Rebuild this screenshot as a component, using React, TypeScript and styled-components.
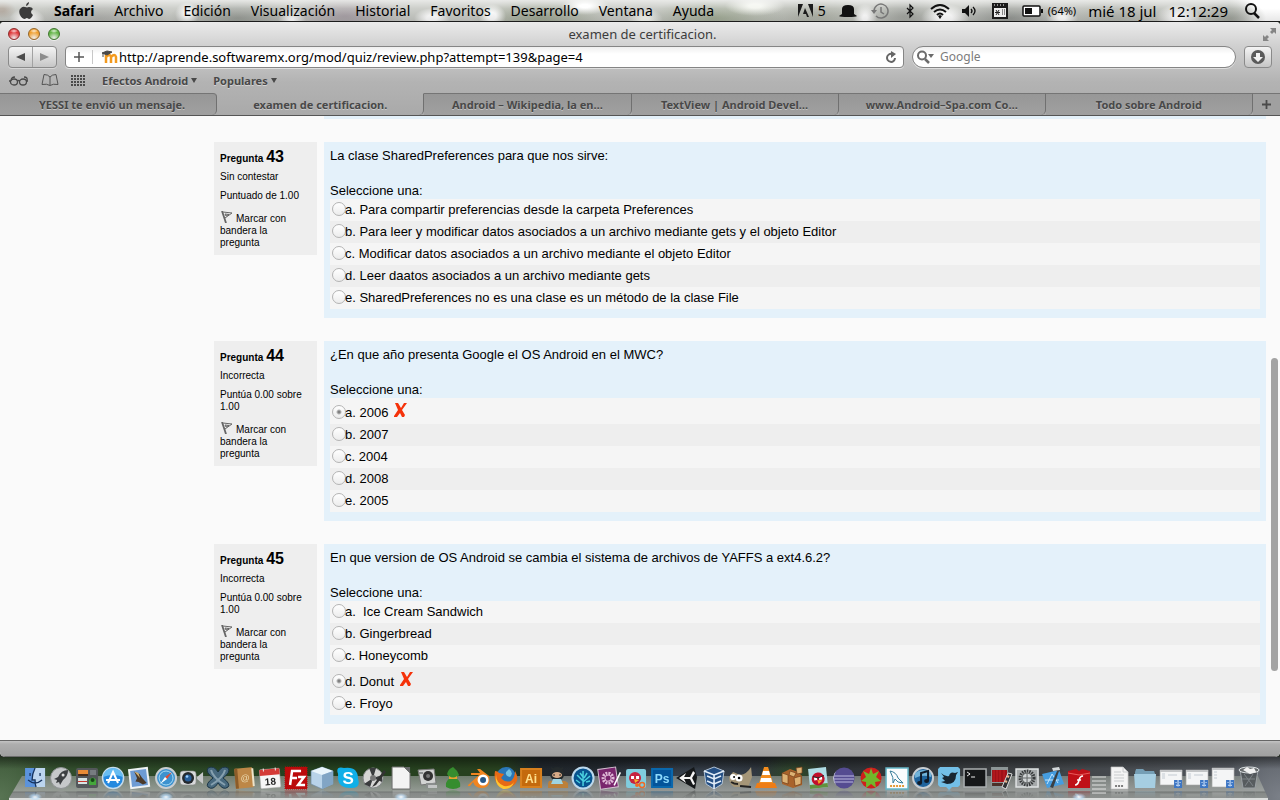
import React from "react";
import styled, { createGlobalStyle } from "styled-components";

const GlobalStyle = createGlobalStyle`
  *, *::before, *::after { box-sizing: border-box; }
  body { margin: 0; background: #2a3029; }
  button, input { font: inherit; color: inherit; margin: 0; padding: 0; border: 0; background: none; }
`;

const uiFont = `"Lucida Grande", "Noto Sans", sans-serif`;
const pageFont = `"Liberation Sans", Arial, sans-serif`;

const Desktop = styled.div`
  min-height: 100vh;
  display: flex;
  flex-direction: column;
  font-family: ${uiFont};
`;

/* ---------- menu bar ---------- */

const MenuBar = styled.header`
  height: 22px;
  display: flex;
  align-items: center;
  padding: 0 16px 0 19px;
  border-bottom: 1px solid #1c1c1c;
  font-size: 14px;
  line-height: 20px;
  color: #000;
  background:
    linear-gradient(rgba(255, 255, 255, 0.6), rgba(255, 255, 255, 0.1) 40%, rgba(60, 60, 60, 0.12)),
    radial-gradient(ellipse 18px 12px at 27px 20px, #fff 30%, transparent),
    radial-gradient(ellipse 14px 9px at 2px 10px, #b2a99f 20%, transparent),
    radial-gradient(ellipse 12px 12px at 187px 14px, #fff 20%, transparent),
    radial-gradient(ellipse 14px 12px at 292px 20px, #fff 10%, transparent),
    radial-gradient(ellipse 18px 10px at 432px 18px, #fff 30%, transparent),
    radial-gradient(ellipse 14px 12px at 492px 16px, #fff 30%, transparent),
    radial-gradient(ellipse 24px 9px at 585px 6px, #fff 20%, transparent),
    radial-gradient(ellipse 18px 12px at 645px 20px, #f4f6f0 20%, transparent),
    radial-gradient(ellipse 30px 10px at 755px 6px, #f3f5ef 20%, transparent),
    radial-gradient(ellipse 12px 14px at 865px 18px, #fff 20%, transparent),
    radial-gradient(ellipse 24px 14px at 945px 18px, #fff 30%, transparent),
    radial-gradient(ellipse 16px 10px at 1062px 18px, #fff 20%, transparent),
    radial-gradient(ellipse 22px 14px at 1178px 18px, #fff 20%, transparent),
    radial-gradient(ellipse 70px 20px at 100px 18px, #adaeaa, transparent),
    radial-gradient(ellipse 70px 20px at 238px 18px, #959993, transparent),
    radial-gradient(ellipse 60px 20px at 345px 16px, #a59da3, transparent),
    radial-gradient(ellipse 70px 20px at 540px 18px, #99a28d, transparent),
    radial-gradient(ellipse 70px 20px at 715px 18px, #9ea892, transparent),
    radial-gradient(ellipse 60px 20px at 815px 16px, #a9ada2, transparent),
    radial-gradient(ellipse 40px 20px at 905px 16px, #9da09a, transparent),
    radial-gradient(ellipse 60px 20px at 1010px 18px, #90938f, transparent),
    radial-gradient(ellipse 70px 20px at 1115px 18px, #aeb1aa, transparent),
    radial-gradient(ellipse 36px 20px at 1230px 18px, #9b9f97, transparent),
    linear-gradient(90deg, #c7c9c4 0 96%, #fff 98%);
`;

const MenuList = styled.nav`
  display: flex;
  align-items: center;
  gap: 20px;
  flex: 1;
`;

const MenuButton = styled.button<{ $strong?: boolean }>`
  font-weight: ${(p) => (p.$strong ? 700 : 400)};
`;

const StatusList = styled.div`
  display: flex;
  align-items: center;
  gap: 12px;
  white-space: nowrap;
`;

const StatusItem = styled.div<{ $size?: number }>`
  display: flex;
  align-items: center;
  gap: 5px;
  font-size: ${(p) => p.$size ?? 14}px;
`;

const Glyph = styled.svg`
  display: block;
  flex: none;
`;

/* ---------- browser window ---------- */

const Window = styled.div`
  flex: 1;
  display: flex;
  flex-direction: column;
  border-radius: 4px 4px 5px 5px;
  overflow: hidden;
  background: #fafafa;
`;

const Chrome = styled.div`
  background: linear-gradient(#ebebeb, #d0d0d0 24px, #b3b3b3 60px, #a9a9a9);
`;

const TitleBar = styled.div`
  height: 24px;
  display: grid;
  grid-template-columns: 80px 1fr 80px;
  align-items: center;
  padding: 0 3px 0 8px;
`;

const Lights = styled.div`
  display: flex;
  gap: 8px;
`;

const Light = styled.button<{ $color: string; $edge: string }>`
  width: 12px;
  height: 12px;
  border-radius: 50%;
  border: 1px solid ${(p) => p.$edge};
  background: radial-gradient(ellipse 4px 2px at 50% 20%, #ffffffd0, transparent),
    radial-gradient(circle at 50% 90%, #ffffff90, ${(p) => p.$color} 60%);
  box-shadow: 0 1px 0 #ffffff90;
`;

const Title = styled.div`
  text-align: center;
  font-size: 13px;
  line-height: 18px;
  color: #3c3c3c;
`;

const FullScreen = styled.button`
  justify-self: end;
`;

const Toolbar = styled.div`
  display: flex;
  gap: 8px;
  padding: 0 8px;
`;

const NavGroup = styled.div`
  display: flex;
  width: 49px;
  height: 22px;
  border: 1px solid #8a8a8a;
  border-radius: 4px;
  background: linear-gradient(#f4f4f4, #c6c6c6);
  box-shadow: 0 1px 0 #ffffff60;
`;

const NavButton = styled.button`
  flex: 1;
  display: flex;
  align-items: center;
  justify-content: center;
  & + & { border-left: 1px solid #a2a2a2; }
`;

const Field = styled.div<{ $round?: boolean }>`
  flex: ${(p) => (p.$round ? "0 1 324px" : "1")};
  min-width: 0;
  height: 22px;
  display: flex;
  align-items: center;
  padding: ${(p) => (p.$round ? "0 10px 0 3px" : "0 6px 0 0")};
  border: 1px solid #858585;
  border-radius: ${(p) => (p.$round ? 11 : 4)}px;
  background: linear-gradient(#efefef, #fff 7px);
  box-shadow: 0 1px 0 #ffffff80;
`;

const AddBookmark = styled.button`
  width: 27px;
  height: 14px;
  display: flex;
  align-items: center;
  justify-content: center;
  border-right: 1px solid #c8c8c8;
  margin-right: 9px;
`;

const FieldInput = styled.input`
  flex: 1;
  min-width: 0;
  font-size: 13px;
  line-height: 18px;
  color: #000;
  outline: 0;
  margin-left: 1px;
  &::placeholder { color: #7b7b7b; opacity: 1; }
`;

const SearchInput = styled(FieldInput)`
  font-size: 12px;
  margin-left: 6px;
`;

const Download = styled.button`
  width: 28px;
  height: 22px;
  display: flex;
  align-items: center;
  justify-content: center;
  border: 1px solid #8a8a8a;
  border-radius: 4px;
  background: linear-gradient(#f4f4f4, #c6c6c6);
`;

const Bookmarks = styled.div`
  height: 25px;
  display: flex;
  align-items: center;
  gap: 16px;
  padding: 0 9px;
  font-size: 11px;
  font-weight: 700;
  line-height: 16px;
  color: #484848;
  text-shadow: 0 1px 0 #ffffff70;
`;

const BookmarkIcons = styled.div`
  display: flex;
  align-items: center;
  gap: 12px;
`;

const Folder = styled.button`
  display: flex;
  align-items: center;
  gap: 3px;
  text-shadow: inherit;
`;

const TabStrip = styled.div`
  display: grid;
  grid-template-columns: 217fr repeat(5, 207fr) 27px;
  height: 23px;
  border-bottom: 1px solid #555;
`;

const Tab = styled.button<{ $active?: boolean }>`
  min-width: 0;
  padding: 0 24px;
  overflow: hidden;
  white-space: nowrap;
  text-overflow: ellipsis;
  font-size: 11px;
  font-weight: 700;
  line-height: 20px;
  color: #484848;
  text-shadow: 0 1px 0 #ffffff60;
  border-top: 1px solid ${(p) => (p.$active ? "transparent" : "#757575")};
  border-right: 1px solid #707070;
  border-bottom-right-radius: 5px;
  background: ${(p) => (p.$active ? "transparent" : "linear-gradient(#979797, #a0a0a0)")};
  &:first-child { padding-left: 32px; border-top-right-radius: 4px; }
`;

const NewTab = styled.button`
  display: flex;
  align-items: center;
  justify-content: center;
  border-top: 1px solid #757575;
  background: #a0a0a0;
`;

/* ---------- quiz page ---------- */

const Page = styled.main`
  position: relative;
  flex: 1;
  padding: 0 14px 15px 214px;
  font-family: ${pageFont};
  color: #000;
`;

const ScrollThumb = styled.div`
  position: absolute;
  right: 2px;
  top: 242px;
  width: 7px;
  height: 313px;
  border-radius: 4px;
  background: #a3a3a3;
`;

const PreviousEnd = styled.div`
  height: 3px;
  margin: 0 0 23px 110px;
  background: #e4f1fa;
`;

const Question = styled.section`
  display: grid;
  grid-template-columns: 103px 1fr;
  column-gap: 7px;
  align-items: start;
  & + & { margin-top: 23px; }
`;

const Info = styled.div`
  padding: 6px 10px 6px 6px;
  background: #eee;
  font-size: 10px;
  line-height: 12px;
`;

const Number = styled.h3`
  margin: 0 0 3px;
  font-size: 10px;
  font-weight: 700;
  line-height: 18px;
  span { font-size: 16px; }
`;

const State = styled.p`
  margin: 0 0 7px;
`;

const FlagButton = styled.button`
  display: block;
  margin-top: 9px;
  text-align: left;
  svg { vertical-align: -1px; margin-right: 1px; }
`;

const Body = styled.form`
  padding: 5px 6px 9px;
  background: #e4f1fa;
  font-size: 13px;
  line-height: 17px;
`;

const Prompt = styled.p`
  margin: 0 0 18px;
`;

const Answers = styled.fieldset`
  margin: 0;
  padding: 0;
  border: 0;
  min-width: 0;
`;

const Legend = styled.legend`
  padding: 0;
`;

const Answer = styled.label<{ $odd: boolean; $wrong?: boolean }>`
  display: flex;
  align-items: center;
  height: ${(p) => (p.$wrong ? 26 : 22)}px;
  padding: ${(p) => (p.$wrong ? "2px 0 0 2px" : "0 0 2px 2px")};
  background: ${(p) => (p.$odd ? "#eee" : "#f5f5f5")};
  white-space: pre-wrap;
`;

const Radio = styled.input`
  appearance: none;
  flex: none;
  width: 14px;
  height: 14px;
  border: 1px solid #b4b4b4;
  border-radius: 50%;
  margin-right: -1px;
  background: linear-gradient(#fff, #ececec);
  &:checked { background: radial-gradient(circle, #808080 1px, transparent 3px), linear-gradient(#fff, #ececec); }
`;

const Wrong = styled.svg`
  display: block;
  margin: 0 0 5px 5px;
`;

const StatusBar = styled.footer`
  height: 17px;
  border-top: 1px solid #666;
  border-bottom: 1px solid #6c6c6c;
  background: linear-gradient(#c4c4c4, #aeaeae 3px, #a0a0a0);
`;

/* ---------- dock ---------- */

const DockArea = styled.div`
  height: 43px;
  padding: 9px 18px 0 22px;
  position: relative;
  overflow: hidden;
  background:
    linear-gradient(#00000070, transparent 12px),
    radial-gradient(ellipse 60px 60px at 0 40px, #587453, transparent),
    radial-gradient(ellipse 40px 30px at 795px 20px, #2e4a27, transparent),
    radial-gradient(ellipse 60px 60px at 1280px 40px, #7b8088, transparent),
    radial-gradient(ellipse 120px 20px at 700px 20px, #3b4552, transparent),
    linear-gradient(90deg, #355030, #24401f 300px, #27401f 500px, #20262c 540px, #262b30 760px, #3a3d40 1000px, #565b62);
`;

const Shelf = styled.div`
  position: absolute;
  left: 9px;
  right: 12px;
  top: 19px;
  height: 22px;
  clip-path: polygon(13px 0, calc(100% - 10px) 0, 100% 100%, 0 100%);
  background: linear-gradient(#8f9690b0, #a2a6a3e0 15px, #707472 16px, #858987 17px, #8d918f);
`;

const ShelfEdge = styled.div`
  position: absolute;
  left: 9px;
  right: 12px;
  bottom: 0;
  height: 2px;
  background: #dcdedd;
`;

const DockItems = styled.nav`
  position: relative;
  display: flex;
`;

const DockItem = styled.button<{ $running?: boolean }>`
  flex: 26 1 0;
  min-width: 0;
  height: 34px;
  display: flex;
  align-items: flex-start;
  background: ${(p) =>
    p.$running ? "radial-gradient(ellipse 7px 4px at 50% 31px, #fff, #bfe2ffb0 50%, transparent)" : "none"};
  svg {
    display: block;
    width: 100%;
    height: 24px;
    -webkit-box-reflect: below -1px linear-gradient(transparent 60%, #00000050);
  }
`;

const DockSeparator = styled.div`
  flex: 13 1 0;
  height: 30px;
  padding-top: 10px;
  background: repeating-linear-gradient(#ffffff60 0 2px, transparent 2px 4px) content-box;
`;

type Drawing = { name: string; art: React.ReactNode; running?: boolean };

const label = (x: number, y: number, size: number, fill: string, text: string) => (
  <text x={x} y={y} fontSize={size} fontWeight="700" fill={fill} textAnchor="middle" fontFamily="Liberation Sans">
    {text}
  </text>
);

const folderWindow = (
  <>
    <path d="M2 4h22v15H2z" fill="#f4f5f6" stroke="#aaa" strokeWidth=".6" />
    <path d="M2 4h22v2H2z" fill="#c3c5c7" />
    <path d="M4 8h3M4 10h3M4 12h3M10 9h9" stroke="#c3cad2" />
    <path d="M16 14h8v8h-8z" fill="#3d76c4" />
    <path d="M20 14v5M18 16v1M22 16v1M18 19q2 2 4 0" stroke="#dfeeff" fill="none" />
  </>
);

const drawings: Drawing[] = [
  { name: "Finder", running: true, art: <><path d="M3 2h20v19H3z" fill="#5b93dc" /><path d="M13 2h10v19h-9q-1-4-1-6h-3Q11 6 13 2z" fill="#bcd5ef" /><path d="M8 7v3M18 7v3M6 14q7 6 14 0M13 2q-3 6-3 12h3q0 4 1 7" stroke="#16335f" fill="none" strokeWidth="1.3" /></> },
  { name: "Launchpad", art: <><circle cx="13" cy="12" r="10.5" fill="#c6c8ca" stroke="#8f9294" /><path d="M20 4q-7 0-10 7l-4 2 3 1-1 3 3-1 1 3 3-5q5-4 5-10z" fill="#3c3f42" /><circle cx="15" cy="9" r="1.5" fill="#ddd" /></> },
  { name: "Paneles", art: <><rect x="2" y="2" width="22" height="20" rx="2" fill="#53575a" /><path d="M4 4h10v6H4z" fill="#e78a35" /><path d="M4 8h10v2H4z" fill="#472c1a" /><path d="M16 4h6v5h-6z" fill="#777c80" /><path d="M4 12h9v6H4z" fill="#d7e4e4" /><path d="M4 15h9v1H4z" fill="#c9362d" /><path d="M15 19v-5q4-5 7 0v5z" fill="#45a83b" /><circle cx="18.5" cy="14" r="2" fill="#174818" /></> },
  { name: "App Store", art: <><circle cx="13" cy="12" r="10.5" fill="#2489df" stroke="#c5dcec" strokeWidth="1.5" /><path d="M3 11a10 9 0 0 1 20 0q-10-4-20 0z" fill="#67bdf2" /><path d="M8 17l5-11 5 11M6 14h14" stroke="#fff" strokeWidth="2" fill="none" /></> },
  { name: "Mail", art: <g transform="rotate(-7 13 12)"><path d="M3 2h20v20H3z" fill="#eef2f4" /><path d="M5 4h16v16H5z" fill="#6d9bd4" /><path d="M9 5l5 3 2 4 4 6-4 1-4-3-3-1 2-3z" fill="#4b3a2a" /><path d="M9 5l4 2 1 5z" fill="#d3b478" /></g> },
  { name: "Safari", running: true, art: <><circle cx="13" cy="12" r="10" fill="#3d92cf" stroke="#c9cdd0" strokeWidth="2" /><circle cx="13" cy="12" r="7" fill="none" stroke="#aadcf4" /><path d="M19 6l-5 7-2-2z" fill="#e34b31" /><path d="M7 18l5-7 2 2z" fill="#fff" /></> },
  { name: "FaceTime", art: <><rect x="1" y="5" width="16" height="14" rx="3" fill="#d8dadb" stroke="#888" strokeWidth=".6" /><path d="M18 11l6-5v12l-6-5z" fill="#c6c8c9" /><circle cx="9" cy="12" r="6" fill="#24292e" /><circle cx="9" cy="12" r="3.5" fill="#285e99" /><circle cx="8" cy="10.5" r="1.3" fill="#9ed2ff" /></> },
  { name: "X11", art: <><path d="M3 2q6-3 10 4 4-7 10-4 3 4-5 10 8 6 5 9-5 4-10-4-5 8-10 4-3-3 5-9-8-6-5-10z" fill="#48697e" stroke="#1b3546" /><path d="M6 4q2 8 14 15M20 4Q18 12 6 19" stroke="#86a0af" strokeWidth="2" fill="none" /></> },
  { name: "Contactos", art: <g transform="rotate(-5 13 12)"><rect x="4" y="2" width="18" height="20" rx="1" fill="#bd8747" /><path d="M4 2h3v20H4z" fill="#8b5c29" /><path d="M21 3h2v18h-2z" fill="#eee4cb" />{label(14, 15, 9, "#ead7ac", "@")}</g> },
  { name: "Calendario", art: <g transform="rotate(-5 13 12)"><rect x="3" y="3" width="20" height="19" rx="1" fill="#f6f6f6" stroke="#aaa" strokeWidth=".5" /><path d="M3 3h20v6H3z" fill="#d43a36" /><path d="M7 2v3M19 2v3" stroke="#eee" />{label(13, 19, 10, "#222", "18")}</g> },
  { name: "FileZilla", art: <><path d="M2 1h22v22H2z" fill="#bb0a0b" stroke="#bb0a0b" strokeDasharray="1 1" /><path d="M7 19L9 5h9M8 12h6M15 11h6l-6 8h7" fill="none" stroke="#fff" strokeWidth="2.5" /></> },
  { name: "Cubo", art: <><path d="M13 1l11 4v13l-11 5-11-5V5z" fill="#b8d3e9" stroke="#6f8da7" strokeWidth=".6" /><path d="M13 1l11 4-11 4L2 5z" fill="#e9f5fc" /><path d="M13 9l11-4v13l-11 5z" fill="#81a5c5" /></> },
  { name: "Skype", art: <><path d="M3 8Q0 0 9 2q14-2 14 11 3 9-7 9Q3 22 3 12z" fill="#10afe8" />{label(13, 18, 17, "#fff", "S")}</> },
  { name: "Disco", art: <><circle cx="12" cy="12" r="10" fill="#d7d7d5" stroke="#85888a" /><path d="M12 12L8 2h7zM12 12l9-3v7zM12 12l-9 6 6 3z" fill="#3a3c3d" /><circle cx="12" cy="12" r="3" fill="#777" /><path d="M23 4L13 18l-2 3 4-2L25 6z" fill="#333" /></> },
  { name: "LibreOffice", running: true, art: <><path d="M4 1h12l6 6v16H4z" fill="#f3f3f3" stroke="#707070" /><path d="M16 1h6v6z" fill="#686b6c" /></> },
  { name: "Captura", art: <><path d="M4 4l16-1 2 14-15 2z" fill="#d2d3d2" stroke="#777" /><circle cx="14" cy="10" r="5" fill="#333" /><circle cx="14" cy="10" r="2" fill="#777" /><path d="M12 17h9v5h-9zM5 6h4v2H5z" fill="#8b8e8e" /><path d="M14 19h9v3h-9z" fill="#c3c5c5" /></> },
  { name: "Adium", art: <><path d="M13 1q4 3 6 8-2 3-4 3 6 2 5 9-7 4-14 0-1-7 5-9-3-1-4-4 1-5 6-7z" fill="#368d2f" /><path d="M9 10q4 3 8 0v3H9z" fill="#e8a42e" /></> },
  { name: "Blender", art: <><path d="M2 19L13 9H5V7h9l-3-4h3l9 7q2 12-7 12-7 0-9-6l-3 4H2z" fill="#f08520" /><circle cx="17" cy="14" r="5.5" fill="#fff" /><circle cx="17" cy="14" r="3" fill="#265787" /></> },
  { name: "Firefox", art: <><circle cx="14" cy="11" r="10" fill="#2a77b8" /><path d="M17 3q5 4 1 8-5-1-4-5z" fill="#73c2e3" /><path d="M3 5q3 0 4 2l5 1-3 4q4 5 10 3 4-4 4-10 5 9-1 14-7 6-15 1Q1 14 3 5z" fill="#e66a16" /><path d="M4 9q0 8 8 11 6 1 10-4-3 8-11 7Q2 19 4 9z" fill="#ffc42f" /></> },
  { name: "Illustrator", art: <><path d="M2 2h22v20H2z" fill="#d9811e" /><path d="M4 4h18v16H4z" fill="#c46a0d" />{label(13, 17, 12, "#ffe08c", "Ai")}</> },
  { name: "GitHub", art: <><circle cx="13" cy="8" r="7" fill="#242a2c" /><path d="M7 1l4 2H7zM19 1l-4 2h4z" fill="#242a2c" /><ellipse cx="13" cy="9" rx="5" ry="3" fill="#d8ab87" /><path d="M10 8v2M16 8v2" stroke="#222" /><path d="M5 15h16l3 2v5H4v-5z" fill="#bc803a" /><path d="M9 13h8l2 5H7z" fill="#9ed4e2" /></> },
  { name: "SourceTree", art: <><circle cx="13" cy="12" r="10.5" fill="#07538f" stroke="#bcd9ed" strokeWidth="2" /><path d="M13 20V5M13 15L7 9M13 16l7-6M13 11l-3-4M14 12l3-5M10 17l-4-3M16 16l4-1" stroke="#4ad0df" strokeWidth="1.5" /></> },
  { name: "Engranaje", art: <g transform="rotate(-8 13 12)"><path d="M3 2h18v20H3z" fill="#79256d" stroke="#d3bfd0" /><circle cx="12" cy="12" r="5" fill="none" stroke="#dfb8d7" strokeWidth="3" strokeDasharray="2 1" /><circle cx="12" cy="12" r="3" fill="#79256d" stroke="#dfb8d7" /><path d="M25 8l-8 12" stroke="#fff" strokeWidth="1.5" /></g> },
  { name: "Rio", art: <><rect x="3" y="3" width="20" height="19" rx="2" fill="#80cdde" /><circle cx="12" cy="12" r="6" fill="#c7233f" /><path d="M8 10h3v3H8zM13 10h3v3h-3z" fill="#fff" /><path d="M11 13l5 1-4 3z" fill="#f5b22b" /><circle cx="19" cy="19" r="2.5" fill="none" stroke="#f16a24" strokeWidth="1.5" /><circle cx="14" cy="19" r="2" fill="#f16a24" /></> },
  { name: "Photoshop", art: <><path d="M2 2h22v20H2z" fill="#0a68ad" /><path d="M4 4h18v16H4z" fill="#04549a" />{label(13, 17, 12, "#8ddafd", "Ps")}</> },
  { name: "Unity", art: <><path d="M1 12L19 1l3 10-2 12z" fill="#15181a" /><path d="M4 12l7-5-2 4h6l3-6 2 2-3 5 3 6-2 1-3-6H9l2 4z" fill="#f4f4f4" /></> },
  { name: "VirtualBox", art: <><path d="M13 1l10 4-2 13-8 5-8-5L3 5z" fill="#244f84" stroke="#b2c3d5" /><path d="M3 5l10 4 10-4M13 9v14M6 10l7 3 7-3M6 15l7 3 7-3" stroke="#e2edf8" fill="none" strokeWidth="1.6" /></> },
  { name: "GIMP", art: <><path d="M2 11l4-5 7 3q7-1 11-8l1 10-4 10H7q-5-3-5-10z" fill="#a59678" /><circle cx="6" cy="11" r="3" fill="#fff" /><circle cx="12" cy="12" r="3.5" fill="#fff" /><circle cx="7" cy="11" r="1" /><circle cx="12" cy="12" r="1.3" /><path d="M4 16q3 2 7 2M13 20l11 1" stroke="#242322" strokeWidth="2" /></> },
  { name: "VLC", art: <><path d="M11 1h4l6 19H5z" fill="#f48d1d" /><path d="M10 5h6l1 4H9zM8 12h10l1 4H7z" fill="#fff" /><path d="M4 17h18l2 5H2z" fill="#ee7d16" /></> },
  { name: "Bloques", art: <><path d="M3 7l8-4 8 3 4 4v9l-9 3-11-4z" fill="#a9632b" /><path d="M3 7l6 2v9l-6-2zM11 5l6 2-2 4-5-2zM17 2l6-1v6l-5 1zM15 12l7-2v8l-6 2z" fill="#ddb274" stroke="#733d18" strokeWidth=".7" /></> },
  { name: "Angry Birds", art: <g transform="rotate(-6 13 12)"><path d="M4 2h18v20H4z" fill="#afdce5" /><path d="M4 18h18v4H4z" fill="#61923e" /><circle cx="13" cy="13" r="6.5" fill="#c1102c" /><path d="M9 11h3v3H9zM14 11h3v3h-3z" fill="#fff" /><path d="M8 10l5 2 6-2" stroke="#222" fill="none" /><path d="M12 14l5 1-4 3z" fill="#f3a327" /></g> },
  { name: "Eclipse", art: <><circle cx="13" cy="12" r="10.5" fill="#554c91" /><path d="M5 5a10 10 0 0 0 0 14q-4-7 0-14z" fill="#d9d9ec" /><path d="M3 10h20M3 13h20M4 16h18" stroke="#bdb9e2" strokeWidth="1.2" /></> },
  { name: "Tomate", art: <><circle cx="13" cy="12" r="10.5" fill="#cf201c" /><path d="M13 2l2 6 6-3-3 6 5 4-6 1 1 6-5-4-5 4v-6l-5-1 5-4-3-6 6 3z" fill="#72b62b" /></> },
  { name: "MySQL Workbench", art: <><path d="M2 2h22v21H2z" fill="#fafcfd" stroke="#65b6c8" strokeWidth="1.5" /><path d="M6 5q6 1 8 7l5 5-5-1-3-3-2 4q1-5-3-12z" fill="none" stroke="#367c99" /><path d="M6 20h14" stroke="#e59b39" strokeWidth="2" strokeDasharray="2 1" /></> },
  { name: "iTunes", art: <><circle cx="13" cy="12" r="10" fill="#1f649e" stroke="#c8ced3" strokeWidth="2" /><path d="M5 7q8-6 16 0v4q-8-3-16 1z" fill="#71b3da" /><path d="M11 17V7l7-2v10" fill="none" stroke="#101c2b" strokeWidth="2" /><ellipse cx="9.5" cy="17" rx="2.500" ry="2" fill="#101c2b" /><ellipse cx="16.5" cy="15" rx="2.500" ry="2" fill="#101c2b" /></> },
  { name: "Twitter", art: <><path d="M4 1h18l2 2v16l-2 2h-6l-3 3-3-3H4l-2-2V3z" fill="#73bfe7" /><path d="M5 7q4 4 8 3 1-5 6-3l3-1-2 3q0 9-9 9l-6-2 4-1-3-3 2-1z" fill="#182631" /></> },
  { name: "Terminal", art: <><path d="M2 3h22v18H2z" fill="#161819" stroke="#aaaeb0" strokeWidth="1.5" /><path d="M5 6l3 2-3 2M9 11h4" stroke="#eee" fill="none" /></> },
  { name: "Photo Booth", art: <><path d="M3 1h17v21H3z" fill="#8d9697" /><path d="M4 4h15v12H4z" fill="#9e1117" /><path d="M6 4v12M9 4v12M12 4v12M16 4v12" stroke="#c01f25" /><path d="M4 17h15v3H4z" fill="#4b3029" /><path d="M20 7l4 1-6 15-4-2z" fill="#303334" stroke="#ddd" /><path d="M19 10l2 1M17 15l2 1" stroke="#eab38b" strokeWidth="2" /></> },
  { name: "Preferencias", art: <><path d="M2 3h22v18H2z" fill="#a5a9aa" stroke="#e0e3e4" strokeWidth="1.5" /><circle cx="13" cy="12" r="7" fill="none" stroke="#373a3b" strokeWidth="3" strokeDasharray="1.500 1" /><circle cx="13" cy="12" r="5" fill="#d0d4d5" stroke="#515555" /><path d="M13 7v10M8 12h10" stroke="#646868" /></> },
  { name: "Xcode", art: <><path d="M2 8l17-4 5 14-17 4z" fill="#469de0" /><path d="M7 18l5-10 6 9M5 14h14" stroke="#c6e8ff" fill="none" /><path d="M13 3q7-3 11 2l-2 1-3-1-6 17-3-1 7-16z" fill="#3a4044" /><path d="M12 2l7-1 1 3-7 1z" fill="#d5d9db" /></> },
  { name: "Flash", running: true, art: <><path d="M2 5l8-2 3 2 3-2 8 2v17H2z" fill="#bf1017" /><path d="M2 7l11 2 11-2" stroke="#e95b5b" fill="none" /><path d="M17 10q-3 0-4 4-1 5-4 5M11 14h4" stroke="#fff" strokeWidth="1.6" fill="none" /></> },
];

const documents: Drawing[] = [
  { name: "Documento", art: <><path d="M5 1h12l5 5v17H5z" fill="#f4f4f4" stroke="#c3c3c3" strokeWidth=".7" /><path d="M17 1v5h5M8 6h7M8 9h10M8 12h10M8 15h10" stroke="#c8cbcd" fill="none" /><path d="M9 20h9" stroke="#555" strokeDasharray="2 1" strokeWidth="1.5" /></> },
  { name: "Carpeta", art: <><path d="M3 6l1-3h7l2 2h9l1 3v13H3z" fill="#759eb5" /><path d="M2 8h22l-1 14H3z" fill="#a6cee2" /></> },
  { name: "Ventana 1", art: folderWindow },
  { name: "Ventana 2", art: folderWindow },
  { name: "Ventana 3", art: <><path d="M2 2h22v19H2z" fill="#f4f5f6" stroke="#aaa" strokeWidth=".6" /><path d="M2 2h22v2H2z" fill="#c3c5c7" /><path d="M4 6h3M4 9h3M4 12h3" stroke="#c3cad2" /><path d="M16 14h8v8h-8z" fill="#3d76c4" /><path d="M20 14v5M18 16v1M22 16v1M18 19q2 2 4 0" stroke="#dfeeff" fill="none" /></> },
  { name: "Papelera", art: <><path d="M4 4h18l-3 18H7z" fill="#4d5256" fillOpacity=".85" stroke="#9ba0a4" /><ellipse cx="13" cy="4" rx="10" ry="3" fill="#686c6e" stroke="#dce0e2" /><path d="M7 4l4-3 3 2 4-1 2 4-6 2z" fill="#f2f2f2" /><path d="M8 8l9 12M17 8L9 20M6 13h13" stroke="#7c8286" /></> },
];

const DockIcon = ({ name, art, running }: Drawing) => (
  <DockItem type="button" aria-label={name} $running={running}>
    <svg viewBox="0 0 26 24">{art}</svg>
  </DockItem>
);

/* ---------- data ---------- */

const menus = ["Archivo", "Edición", "Visualización", "Historial", "Favoritos", "Desarrollo", "Ventana", "Ayuda"];

const tabs = [
  "YESSI te envió un mensaje.",
  "examen de certificacion.",
  "Android – Wikipedia, la en…",
  "TextView | Android Devel…",
  "www.Android–Spa.com Co…",
  "Todo sobre Android",
];

const questions = [
  {
    number: 43,
    state: "Sin contestar",
    grade: "Puntuado de 1.00",
    prompt: "La clase SharedPreferences para que nos sirve:",
    chosen: -1,
    answers: [
      "Para compartir preferencias desde la carpeta Preferences",
      "Para leer y modificar datos asociados a un archivo mediante gets y el objeto Editor",
      "Modificar datos asociados a un archivo mediante el objeto Editor",
      "Leer daatos asociados a un archivo mediante gets",
      "SharedPreferences no es una clase es un método de la clase File",
    ],
  },
  {
    number: 44,
    state: "Incorrecta",
    grade: "Puntúa 0.00 sobre 1.00",
    prompt: "¿En que año presenta Google el OS Android en el MWC?",
    chosen: 0,
    answers: ["2006", "2007", "2004", "2008", "2005"],
  },
  {
    number: 45,
    state: "Incorrecta",
    grade: "Puntúa 0.00 sobre 1.00",
    prompt: "En que version de OS Android se cambia el sistema de archivos de YAFFS a ext4.6.2?",
    chosen: 3,
    answers: ["\u00a0Ice Cream Sandwich", "Gingerbread", "Honeycomb", "Donut", "Froyo"],
  },
];

const StatusIcons = () => (
  <StatusList>
    <StatusItem>
      <Glyph width="15" height="14" viewBox="0 0 15 14">
        <path d="M0 0h5L0 13zM10 0h5v13zM7 4l4 9H9l-1-3H5z" fill="#1c1c1c" />
      </Glyph>
      5
    </StatusItem>
    <Glyph width="20" height="14" viewBox="0 0 20 14">
      <path d="M4 10V5q0-4 6-4t6 4v5l3 2q-1 1-9 1t-9-1z" fill="#111" />
    </Glyph>
    <Glyph width="20" height="16" viewBox="0 0 20 16" fill="none" stroke="#777" strokeWidth="1.5">
      <path d="M4 8a7 7 0 1 1 2 5M11 4v5l3 2" />
      <path d="M1 7h6l-3 4z" fill="#777" stroke="none" />
    </Glyph>
    <Glyph width="16" height="16" viewBox="0 0 16 16" fill="none" stroke="#111" strokeWidth="1.2">
      <path d="M5 5l6 6-3 3V2l3 3-6 6" />
    </Glyph>
    <Glyph width="20" height="16" viewBox="0 0 20 16" fill="none" stroke="#111" strokeWidth="2">
      <path d="M1 6q9-8 18 0M4 9q6-5 12 0M7 12q3-3 6 0" />
      <path d="M8 13l2 3 2-3-2-1z" fill="#111" stroke="none" />
    </Glyph>
    <Glyph width="16" height="14" viewBox="0 0 16 14" fill="none" stroke="#111" strokeWidth="1.3">
      <path d="M0 5h3l4-4v12L3 9H0z" fill="#111" stroke="none" />
      <path d="M9 5q2 2 0 4M11 3q4 4 0 8" />
    </Glyph>
    <Glyph width="20" height="16" viewBox="0 0 20 16">
      <path d="M2 0h16v16H2z" fill="#1a1a1a" />
      <path d="M4 5h12v9H4z" fill="#eee" />
      <path d="M4 2h1M7 2h1M10 2h1M13 2h1" stroke="#fff" />
      <path d="M5 9.5h5M6 7l3 5M9 7l-3 5M12 7h1M14 7h1M12 9h1M14 9h1M12 11h1M14 11h1" stroke="#222" />
    </Glyph>
    <StatusItem $size={11}>
      <Glyph width="21" height="12" viewBox="0 0 21 12">
        <rect x="1" y="1" width="17" height="10" rx="1" fill="#fff" stroke="#111" strokeWidth="1.5" />
        <path d="M3 3h7v6H3zM19 4h2v4h-2z" fill="#111" />
      </Glyph>
      (64%)
    </StatusItem>
    <StatusItem $size={15}>mié 18 jul</StatusItem>
    <StatusItem $size={15}>12:12:29</StatusItem>
    <Glyph width="24" height="16" viewBox="0 0 24 16" fill="none" stroke="#111" strokeWidth="2">
      <circle cx="11" cy="6" r="5" />
      <path d="M14 10l5 5" strokeWidth="2.5" />
    </Glyph>
  </StatusList>
);

const Caret = () => (
  <Glyph width="6" height="5" viewBox="0 0 6 5">
    <path d="M0 0h6L3 5z" fill="#484848" />
  </Glyph>
);

export default function App() {
  return (
    <Desktop>
      <GlobalStyle />
      <MenuBar>
        <MenuList>
          <Glyph width="15" height="18" viewBox="0 0 15 18" fill="#3b3b3b">
            <path d="M10 0q0 3-3 4 0-3 3-4zM14 13q-2 4-4 4l-2-1q-1 0-2 1-3 0-5-4-2-5 1-7 2-2 4-1l2 .5L10 5q3 0 4 2-4 3 0 6z" />
          </Glyph>
          <MenuButton type="button" $strong>Safari</MenuButton>
          {menus.map((m) => (
            <MenuButton type="button" key={m}>{m}</MenuButton>
          ))}
        </MenuList>
        <StatusIcons />
      </MenuBar>

      <Window>
        <Chrome>
          <TitleBar>
            <Lights>
              <Light type="button" aria-label="Cerrar" $color="#e0393b" $edge="#8d2b2b" />
              <Light type="button" aria-label="Minimizar" $color="#f0a02f" $edge="#94652a" />
              <Light type="button" aria-label="Ampliar" $color="#62b545" $edge="#3f752f" />
            </Lights>
            <Title>examen de certificacion.</Title>
            <FullScreen type="button" aria-label="Pantalla completa">
              <Glyph width="15" height="15" viewBox="0 0 15 15">
                <path d="M8 1h6v6l-2-2-2 2-2-2 2-2zM1 8l2 2 2-2 2 2-2 2 2 2H1z" fill="#858585" />
              </Glyph>
            </FullScreen>
          </TitleBar>
          <Toolbar>
            <NavGroup>
              <NavButton type="button" aria-label="Atrás">
                <Glyph width="9" height="10" viewBox="0 0 9 10"><path d="M9 1v8L0 5z" fill="#4b4b4b" /></Glyph>
              </NavButton>
              <NavButton type="button" aria-label="Adelante">
                <Glyph width="9" height="10" viewBox="0 0 9 10"><path d="M0 1v8l9-4z" fill="#8d8d8d" /></Glyph>
              </NavButton>
            </NavGroup>
            <Field>
              <AddBookmark type="button" aria-label="Añadir favorito">
                <Glyph width="10" height="10" viewBox="0 0 10 10"><path d="M5 0v10M0 5h10" stroke="#555" strokeWidth="1.5" /></Glyph>
              </AddBookmark>
              <Glyph width="16" height="14" viewBox="0 0 16 14">
                <path d="M4 13V5M4 7q4-4 5 0v6M9 7q4-4 5 0v6" fill="none" stroke="#f39a1e" strokeWidth="2.5" />
                <path d="M0 3l5-2 5 1-5 3zM1 3v4" fill="#494949" stroke="#494949" />
              </Glyph>
              <FieldInput
                aria-label="Dirección"
                defaultValue="http://aprende.softwaremx.org/mod/quiz/review.php?attempt=139&page=4"
              />
              <Glyph width="12" height="13" viewBox="0 0 12 13">
                <path d="M10 7a4 4 0 1 1-3-4" fill="none" stroke="#666" strokeWidth="2" />
                <path d="M6 0l5 3-5 4z" fill="#666" />
              </Glyph>
            </Field>
            <Field $round>
              <Glyph width="18" height="14" viewBox="0 0 18 14" fill="none" stroke="#6b6b6b" strokeWidth="2">
                <circle cx="6" cy="5.5" r="4" />
                <path d="M9 9l4 4" strokeWidth="2.5" />
                <path d="M12 4h6l-3 4z" fill="#6b6b6b" stroke="none" />
              </Glyph>
              <SearchInput type="search" aria-label="Buscar" placeholder="Google" />
            </Field>
            <Download type="button" aria-label="Descargas">
              <Glyph width="14" height="14" viewBox="0 0 14 14">
                <circle cx="7" cy="7" r="7" fill="#5a5a5a" />
                <path d="M5 3h4v4h3l-5 5-5-5h3z" fill="#f2f2f2" />
              </Glyph>
            </Download>
          </Toolbar>
          <Bookmarks>
            <BookmarkIcons>
              <Glyph width="20" height="12" viewBox="0 0 20 12" fill="none" stroke="#4a4a4a" strokeWidth="1.3">
                <ellipse cx="5" cy="7" rx="3.500" ry="3" />
                <ellipse cx="14" cy="7" rx="3.500" ry="3" />
                <path d="M8 6q2-1 3 0M2 6Q2 2 6 2M18 6q1-4-3-4M0 6h2M17 6h2" />
              </Glyph>
              <Glyph width="18" height="13" viewBox="0 0 18 13" fill="none" stroke="#555">
                <path d="M9 3Q7 .5 3 .5L1 10.500q5-1 8 1 3-2 8-1L15 .5Q11 .5 9 3zM9 3v8" />
              </Glyph>
              <Glyph width="15" height="11" viewBox="0 0 15 11">
                <path d="M0 1h15M0 4h15M0 7h15M0 10h15" stroke="#4a4a4a" strokeWidth="2" strokeDasharray="2 1" />
              </Glyph>
            </BookmarkIcons>
            <Folder type="button">Efectos Android<Caret /></Folder>
            <Folder type="button">Populares<Caret /></Folder>
          </Bookmarks>
          <TabStrip>
            {tabs.map((t, i) => (
              <Tab type="button" key={t} $active={i === 1}>{t}</Tab>
            ))}
            <NewTab type="button" aria-label="Nueva pestaña">
              <Glyph width="9" height="9" viewBox="0 0 9 9"><path d="M4.500 0v9M0 4.500h9" stroke="#4a4a4a" strokeWidth="1.8" /></Glyph>
            </NewTab>
          </TabStrip>
        </Chrome>

        <Page>
          <PreviousEnd />
          {questions.map((q) => (
            <Question key={q.number}>
              <Info>
                <Number>Pregunta <span>{q.number}</span></Number>
                <State>{q.state}</State>
                <State>{q.grade}</State>
                <FlagButton type="button">
                  <svg width="15" height="12" viewBox="0 0 15 12" fill="none" stroke="#666">
                    <path d="M2 0l4 12" strokeWidth="1.8" />
                    <path d="M3 1l9 1-7 5M5 3l4 .5L6 5z" />
                  </svg>
                  Marcar con bandera la pregunta
                </FlagButton>
              </Info>
              <Body>
                <Prompt>{q.prompt}</Prompt>
                <Answers>
                  <Legend>Seleccione una:</Legend>
                  {q.answers.map((a, i) => (
                    <Answer key={a} $odd={i % 2 === 1} $wrong={q.chosen === i}>
                      <Radio type="radio" name={`q${q.number}`} defaultChecked={q.chosen === i} />
                      {`${"abcde"[i]}. ${a}`}
                      {q.chosen === i && (
                        <Wrong width="14" height="16" viewBox="0 0 14 16">
                          <path d="M2 1h3l3 5 3-5h3L9 8l3 5-1 2H9l-2-4-3 4H1v-1l4-6z" fill="#f5320a" />
                        </Wrong>
                      )}
                    </Answer>
                  ))}
                </Answers>
              </Body>
            </Question>
          ))}
          <ScrollThumb />
        </Page>
        <StatusBar />
      </Window>

      <DockArea>
        <Shelf />
        <ShelfEdge />
        <DockItems>
          {drawings.map((d) => <DockIcon key={d.name} {...d} />)}
          <DockSeparator />
          {documents.map((d) => <DockIcon key={d.name} {...d} />)}
        </DockItems>
      </DockArea>
    </Desktop>
  );
}
